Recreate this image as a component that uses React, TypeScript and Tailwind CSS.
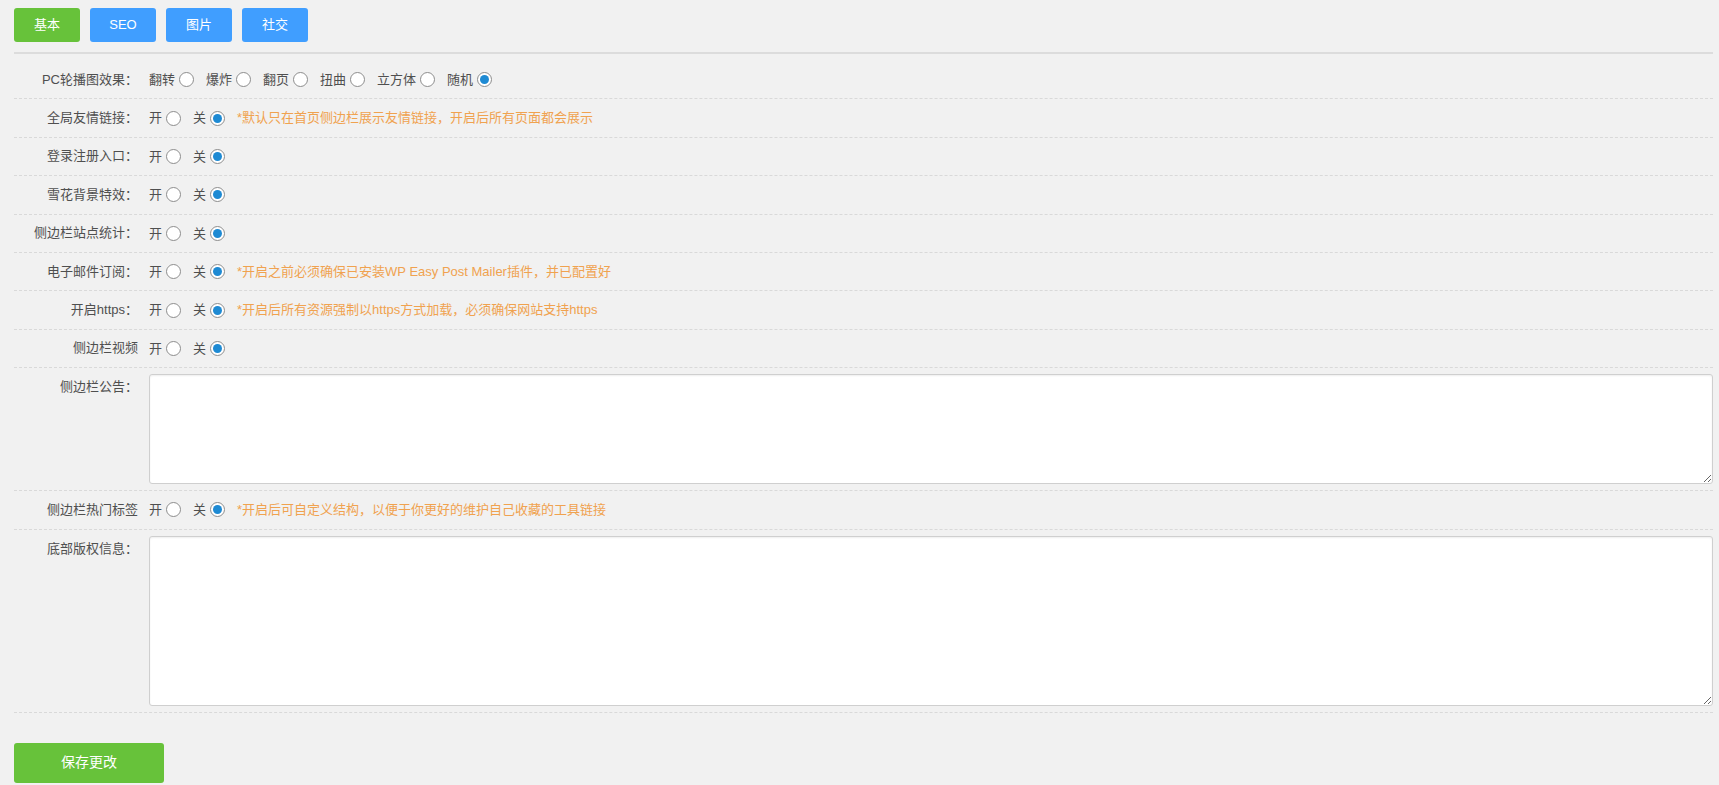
import React from 'react';

const FONT = { fontFamily: '"Liberation Sans", "Noto Sans CJK SC", sans-serif' };

interface SwitchRow {
  label: string;
  hint?: string;
}

const switchRows: SwitchRow[] = [
  { label: '全局友情链接：', hint: '*默认只在首页侧边栏展示友情链接，开启后所有页面都会展示' },
  { label: '登录注册入口：' },
  { label: '雪花背景特效：' },
  { label: '侧边栏站点统计：' },
  { label: '电子邮件订阅：', hint: '*开启之前必须确保已安装WP Easy Post Mailer插件，并已配置好' },
  { label: '开启https：', hint: '*开启后所有资源强制以https方式加载，必须确保网站支持https' },
  { label: '侧边栏视频' },
];

const carouselEffects = ['翻转', '爆炸', '翻页', '扭曲', '立方体', '随机'];

function Radio({ checked }: { checked?: boolean }) {
  return (
    <span className="ml-[4px] inline-flex h-[15px] w-[15px] shrink-0 items-center justify-center rounded-full border border-[#8d8d8d] bg-white">
      {checked && <span className="h-[9px] w-[9px] rounded-full bg-[#1e8ad3]" />}
    </span>
  );
}

function Option({ text, checked }: { text: string; checked?: boolean }) {
  return (
    <label className="flex items-center">
      <span>{text}</span>
      <Radio checked={checked} />
    </label>
  );
}

function Label({ children, top }: { children: React.ReactNode; top?: boolean }) {
  return (
    <div className={`w-[124px] shrink-0 text-right leading-[20px] ${top ? 'pt-[3px]' : ''}`}>
      {children}
    </div>
  );
}

function OnOffRow({ label, hint }: SwitchRow) {
  return (
    <div className="flex h-[38.4px] items-center gap-[11px] border-b border-dashed border-[#d9d9d9]">
      <Label>{label}</Label>
      <div className="flex items-center gap-[12px]">
        <Option text="开" />
        <Option text="关" checked />
        {hint && <span className="text-[#f0a24f]">{hint}</span>}
      </div>
    </div>
  );
}

function TextareaRow({ label, height }: { label: string; height: string }) {
  return (
    <div className="flex items-start gap-[11px] border-b border-dashed border-[#d9d9d9] py-[6px]">
      <Label top>{label}</Label>
      <textarea
        className={`block ${height} flex-1 resize rounded-[3px] border border-[#cfcfcf] bg-white shadow-[inset_0_1px_2px_rgba(0,0,0,0.07)] outline-none`}
      />
    </div>
  );
}

export default function App() {
  return (
    <div className="min-h-[785px] bg-[#f1f1f1] pl-[14px] pr-[6px] pt-[8px] text-[13px] text-[#4f4f4f]" style={FONT}>
      <div className="flex gap-[10px] pb-[10px]">
        <button className="h-[34px] w-[66px] rounded-[3px] bg-[#67c23a] text-[13px] text-white">基本</button>
        <button className="h-[34px] w-[66px] rounded-[3px] bg-[#409eff] text-[13px] text-white">SEO</button>
        <button className="h-[34px] w-[66px] rounded-[3px] bg-[#409eff] text-[13px] text-white">图片</button>
        <button className="h-[34px] w-[66px] rounded-[3px] bg-[#409eff] text-[13px] text-white">社交</button>
      </div>

      <div className="border-t-2 border-[#dcdcdc] pt-[7px]">
        <div className="flex h-[38.4px] items-center gap-[11px] border-b border-dashed border-[#d9d9d9]">
          <Label>PC轮播图效果：</Label>
          <div className="flex items-center gap-[12px]">
            {carouselEffects.map((e, i) => (
              <Option key={e} text={e} checked={i === carouselEffects.length - 1} />
            ))}
          </div>
        </div>

        {switchRows.map((row) => (
          <OnOffRow key={row.label} {...row} />
        ))}

        <TextareaRow label="侧边栏公告：" height="h-[110px]" />
        <OnOffRow label="侧边栏热门标签" hint="*开启后可自定义结构，以便于你更好的维护自己收藏的工具链接" />
        <TextareaRow label="底部版权信息：" height="h-[170px]" />
      </div>

      <button className="mt-[30px] h-[40px] w-[150px] rounded-[3px] bg-[#67c23a] text-[14px] text-white">
        保存更改
      </button>
    </div>
  );
}
